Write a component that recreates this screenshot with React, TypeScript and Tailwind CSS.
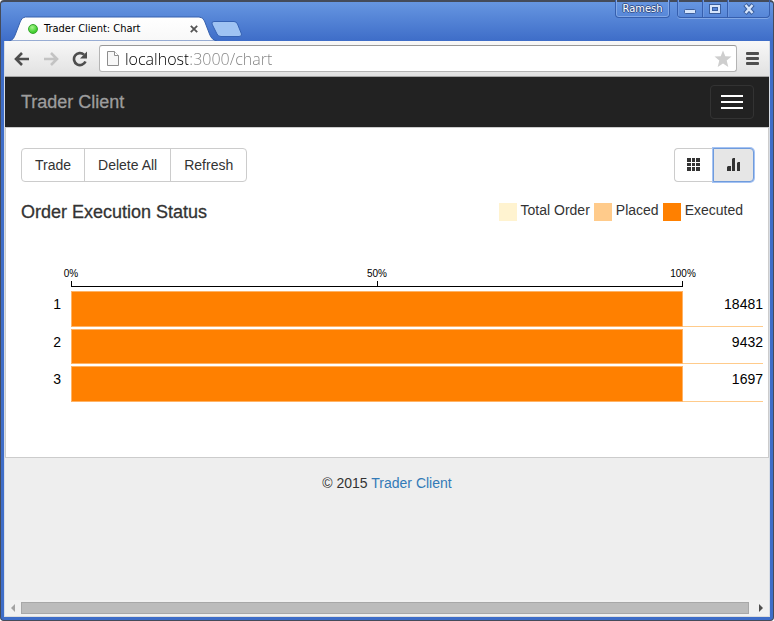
import React from "react";

const legend = [
  { label: "Total Order", swatch: "bg-[#fff3d0]" },
  { label: "Placed", swatch: "bg-[#ffcb8b]" },
  { label: "Executed", swatch: "bg-[#ff8000]" },
];

const orders = [
  { id: 1, total: 18481, executed: 100 },
  { id: 2, total: 9432, executed: 100 },
  { id: 3, total: 1697, executed: 100 },
];

const ticks = ["0%", "50%", "100%"];

function TitleBar() {
  return (
    <header className="flex h-[41px] items-start justify-between">
      <div className="relative mt-[16px] ml-[5px] h-[25px] w-[236px]">
        <svg className="absolute inset-0" width="236" height="25" viewBox="0 0 236 25" aria-hidden="true">
          <defs>
            <linearGradient id="tab" x1="0" y1="0" x2="0" y2="1">
              <stop offset="0" stopColor="#ffffff" />
              <stop offset="1" stopColor="#f8f8f8" />
            </linearGradient>
          </defs>
          <path d="M0 25 C4 24 5 22 6.500 18 L11.500 5 Q13 1 16.500 1 L190 1 Q194 1 195.500 5 L200.500 18 Q202.500 24 208 25 Z" fill="url(#tab)" stroke="#3761ae" strokeWidth="1" />
          <path d="M205 5.500 H225 Q227.500 5.500 228.500 8 L232.500 18 Q233 20.500 230 20.500 H212 Q209 20.500 208 18 L203 8 Q202.500 5.500 205 5.500 Z" fill="#9fc3f3" stroke="#3562b4" strokeWidth="1" />
        </svg>
        <div className="relative flex h-[25px] w-[193px] items-center pl-[19px] text-[11px] text-black">
          <span className="h-[10px] w-[10px] rounded-full border border-[#35a52b] bg-[radial-gradient(circle_at_40%_30%,#a8f58c,#43cf32_65%)]" />
          <span className="ml-[6px] flex-1 whitespace-nowrap font-['DejaVu_Sans_Condensed','DejaVu_Sans',sans-serif] leading-[14px]">Trader Client: Chart</span>
          <button aria-label="Close tab" className="mr-[4px]">
            <svg width="8" height="8" viewBox="0 0 8 8" stroke="#555" strokeWidth="1.800"><path d="M.8 .8 7.200 7.200M7.200 .8 .8 7.200" /></svg>
          </button>
        </div>
      </div>
      <div className="flex h-[18px] text-white">
        <button className="mr-[7px] w-[55px] rounded-b-[4px] border border-t-0 border-[#365fae] font-['DejaVu_Sans_Condensed','DejaVu_Sans',sans-serif] text-[11px] leading-[18px] shadow-[inset_0_-1px_0_#82a8e6,inset_1px_0_0_#82a8e6,inset_-1px_0_0_#82a8e6] [text-shadow:1px_0_0_#34508a,-1px_0_0_#34508a,0_1px_0_#34508a,0_-1px_0_#34508a]">Ramesh</button>
        <div className="flex overflow-hidden rounded-b-[4px] border border-t-0 border-[#365fae] shadow-[0_1px_0_#82a8e6]">
          <button aria-label="Minimize" className="flex w-[25px] items-center justify-center border-r border-[#365fae] shadow-[inset_1px_0_0_#6e98df]">
            <svg width="14" height="12" viewBox="0 0 14 12"><rect x="1.500" y="6.500" width="11" height="4" rx="1" fill="#d6e5fb" stroke="#3c5f9d" /></svg>
          </button>
          <button aria-label="Maximize" className="flex w-[25px] items-center justify-center border-r border-[#365fae] shadow-[inset_1px_0_0_#6e98df]">
            <svg width="14" height="12" viewBox="0 0 14 12"><rect x="1.500" y="1.500" width="11" height="9" fill="#d6e5fb" stroke="#3c5f9d" /><rect x="4.500" y="4.500" width="5" height="3" fill="#5585d8" stroke="#3c5f9d" /></svg>
          </button>
          <button aria-label="Close" className="flex w-[41px] items-center justify-center shadow-[inset_1px_0_0_#6e98df]">
            <svg width="14" height="12" viewBox="0 0 14 12" fill="none"><path d="m3 1.500 8 9m0-9-8 9" stroke="#3c5f9d" strokeWidth="4.500" /><path d="m3.500 2 7 8m0-8-7 8" stroke="#d6e5fb" strokeWidth="2.400" /></svg>
          </button>
        </div>
      </div>
    </header>
  );
}

function Toolbar() {
  return (
    <div className="flex h-[36px] items-center border-b border-[#a5a5a5] bg-gradient-to-b from-[#f8f8f8] to-[#e1e1e1] pr-[10px] pl-[9px]">
      <button aria-label="Back">
        <svg width="16" height="14" viewBox="0 0 16 14" fill="none" stroke="#4d4d4d" strokeWidth="2.600"><path d="M15 7H2M8 1 2 7l6 6" /></svg>
      </button>
      <button aria-label="Forward" className="ml-[13px]">
        <svg width="16" height="14" viewBox="0 0 16 14" fill="none" stroke="#c3c3c3" strokeWidth="2.600"><path d="M1 7h13M8 1l6 6-6 6" /></svg>
      </button>
      <button aria-label="Reload" className="ml-[12px]">
        <svg width="18" height="16" viewBox="0 0 18 16"><path d="M14.500 10.500A6 6 0 1 1 13 3.600" fill="none" stroke="#4d4d4d" strokeWidth="2.600" /><path d="M16 .5v7H9z" fill="#4d4d4d" /></svg>
      </button>
      <div className="ml-[10px] flex h-[27px] flex-1 items-center rounded-[3px] border border-[#b4b4b4] border-t-[#989898] bg-white pr-[4px] pl-[7px]">
        <svg width="12" height="15" viewBox="0 0 12 15" fill="#f7f7f7" stroke="#8d8d8d" aria-hidden="true"><path d="M.5.5h7l4 4v10H.5z" /><path d="M7.500.5v4h4" fill="#fff" /></svg>
        <input
          aria-label="Address"
          defaultValue="localhost:3000/chart"
          className="ml-[6px] h-[24px] min-w-0 flex-1 bg-[linear-gradient(90deg,#000_63px,#808080_63px)] bg-clip-text font-['Open_Sans','Noto_Sans',sans-serif] text-[16px] font-light text-transparent outline-none"
        />
        <button aria-label="Bookmark this page">
          <svg width="18" height="18" viewBox="0 0 18 18" fill="#cecece"><path d="m9 .5 2.300 5.700 6.200.4-4.800 4 1.600 6.400L9 13.500 3.700 17l1.600-6.400-4.800-4 6.200-.4z" /></svg>
        </button>
      </div>
      <button aria-label="Browser menu" className="ml-[9px] flex flex-col gap-[2px]">
        <span className="h-[3px] w-[13px] rounded-[1px] bg-[#4f4f4f]" />
        <span className="h-[3px] w-[13px] rounded-[1px] bg-[#4f4f4f]" />
        <span className="h-[3px] w-[13px] rounded-[1px] bg-[#4f4f4f]" />
      </button>
    </div>
  );
}

function Navbar() {
  return (
    <nav className="flex h-[50px] items-center justify-between bg-[#222] pr-[15px] pl-[16px]">
      <a href="#home" className="text-[18px] leading-[20px] text-[#9d9d9d] [-webkit-text-stroke:0.3px]">Trader Client</a>
      <button aria-label="Toggle navigation" className="flex h-[34px] w-[44px] flex-col items-center justify-center gap-[4px] rounded-[4px] border border-[#333]">
        <span className="h-[2px] w-[22px] bg-white" />
        <span className="h-[2px] w-[22px] bg-white" />
        <span className="h-[2px] w-[22px] bg-white" />
      </button>
    </nav>
  );
}

function Actions() {
  return (
    <div className="flex items-center justify-between">
      <div className="flex h-[34px] divide-x divide-[#ccc] rounded-[4px] border border-[#ccc]">
        <button className="px-[13px]">Trade</button>
        <button className="px-[13px]">Delete All</button>
        <button className="px-[13px]">Refresh</button>
      </div>
      <div className="flex h-[34px]">
        <button aria-label="Table view" className="flex w-[39px] items-center justify-center rounded-l-[4px] border border-r-0 border-[#ccc]">
          <svg width="14" height="14" viewBox="0 0 14 14" fill="#333">
            <path d="M0 0h4v4H0zM5 0h3v4H5zM9 0h4v4H9zM0 5h4v3H0zM5 5h3v3H5zM9 5h4v3H9zM0 9h4v4H0zM5 9h3v4H5zM9 9h4v4H9z" />
          </svg>
        </button>
        <button aria-label="Chart view" aria-pressed="true" className="flex w-[41px] items-center justify-center rounded-r-[4px] border border-[#6f9bdc] bg-[#e6e6e6] shadow-[0_0_0_1px_#a5c3f3]">
          <svg width="14" height="14" viewBox="0 0 14 14" fill="#333">
            <path d="M0 9 1 8h3v5H0zM5 1l1-1h2v13H5zM10 5l1-1h2v9h-3z" />
          </svg>
        </button>
      </div>
    </div>
  );
}

function StatusChart() {
  return (
    <section className="pr-[5px] pl-[15px] text-black">
      <div className="pr-[80px] pl-[50px]">
        <div className="flex h-[13px] justify-between text-[10px] leading-[13px]">
          {ticks.map((t) => (
            <span key={t} className="flex w-0 justify-center whitespace-nowrap">{t}</span>
          ))}
        </div>
        <div className="mt-[1px] flex h-[6px] justify-between border-x border-b border-black">
          <span />
          <span className="w-px bg-black" />
          <span />
        </div>
      </div>
      <div className="mt-[4px] flex h-[111px] flex-col gap-[2px]">
        {orders.map((o) => (
          <div key={o.id} className="flex flex-1 leading-[26px]">
            <span className="w-[50px] pr-[10px] text-right">{o.id}</span>
            <div className="flex-1">
              <div className="h-full border border-[#ffb366] bg-[#ff8000]" style={{ width: `${o.executed}%` }} />
            </div>
            <span className="flex w-[80px] flex-col text-right">
              <span className="flex-1">{o.total}</span>
              <span className="h-px bg-[#ffcb8b]" />
            </span>
          </div>
        ))}
      </div>
    </section>
  );
}

function ScrollBar() {
  return (
    <div className="flex h-[17px] items-center border-b border-[#ddd] bg-[#f1f1f1] px-[6px]" aria-hidden="true">
      <svg width="4" height="8" viewBox="0 0 4 8" fill="#a3a3a3"><path d="M4 0v8L0 4z" /></svg>
      <div className="mx-[6px] mr-[10px] h-[12px] flex-1 border border-[#a8a8a8] bg-[#bcbcbc]" />
      <svg width="4" height="8" viewBox="0 0 4 8" fill="#505050"><path d="M0 0v8l4-4z" /></svg>
    </div>
  );
}

export default function App() {
  return (
    <div className="flex min-h-screen flex-col rounded-[4px] border border-t-2 border-[#444b5a] bg-[#4070cb] bg-[linear-gradient(#6696e1,#3e6dc8_39px)] px-[3px] pb-[3px] font-['Liberation_Sans',Arial,sans-serif] text-[14px] text-[#333] [&>*:first-child]:-mt-[2px]">
      <TitleBar />
      <div className="flex flex-1 flex-col border-x border-[#d7dde5] bg-[#eee]">
        <Toolbar />
        <Navbar />
        <main className="border border-[#ccc] bg-white pb-[55px]">
          <div className="pt-[20px] pr-[14px] pl-[15px]">
            <Actions />
            <div className="mt-[20px] flex items-start justify-between pr-[11px]">
              <h4 className="text-[18px] font-medium leading-[20px] [-webkit-text-stroke:0.3px]">Order Execution Status</h4>
              <ul className="flex gap-[4px] leading-[16px]">
                {legend.map((l) => (
                  <li key={l.label} className="flex gap-[4px]">
                    <span className={`mt-[1px] h-[18px] w-[18px] ${l.swatch}`} />
                    {l.label}
                  </li>
                ))}
              </ul>
            </div>
          </div>
          <div className="mt-[45px]">
            <StatusChart />
          </div>
        </main>
        <footer className="flex-1 pt-[15px] text-center leading-[20px]">
          © 2015 <a href="#home" className="text-[#337ab7]">Trader Client</a>
        </footer>
        <ScrollBar />
      </div>
    </div>
  );
}
